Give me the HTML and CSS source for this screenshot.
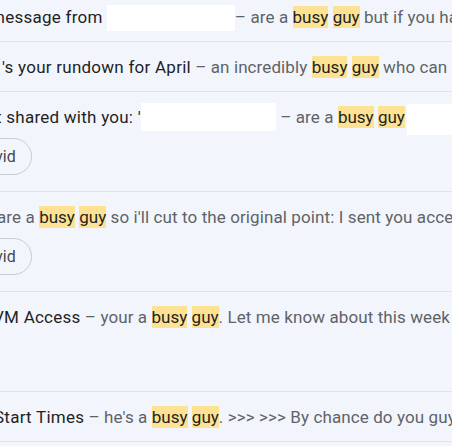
FILE: index.html
```html
<!DOCTYPE html>
<html>
<head>
<meta charset="utf-8">
<link rel="stylesheet" href="styles.css">
</head>
<body>
<div class="list">
  <div class="row">
    <div class="line off-1"><span class="subj">message from</span> <span class="redact r-a"></span><span class="snip">– are a <mark class="hl">busy</mark> <mark class="hl">guy</mark> but if you have a minute</span></div>
  </div>
  <div class="row">
    <div class="line off-2"><span class="subj">'s your rundown for April</span> <span class="snip">– an incredibly <mark class="hl">busy</mark> <mark class="hl">guy</mark> who can never</span></div>
  </div>
  <div class="row tall">
    <div class="line off-3"><span class="subj">t shared with you: '</span><span class="redact r-b"></span> <span class="snip">– are a <mark class="hl">busy</mark> <mark class="hl">guy</mark></span><span class="redact r-c"></span></div>
    <div class="chips"><span class="chip">vid</span></div>
  </div>
  <div class="row tall">
    <div class="line off-4"><span class="snip">are a <mark class="hl">busy</mark> <mark class="hl">guy</mark> so i'll cut to the original point: I sent you access</span></div>
    <div class="chips"><span class="chip">vid</span></div>
  </div>
  <div class="row tall">
    <div class="line off-5"><span class="subj">VM Access</span> <span class="snip">– your a <mark class="hl">busy</mark> <mark class="hl">guy</mark>. Let me know about this week</span></div>
  </div>
  <div class="row">
    <div class="line off-6"><span class="subj">Start Times</span> <span class="snip">– he's a <mark class="hl">busy</mark> <mark class="hl">guy</mark>. &gt;&gt;&gt; &gt;&gt;&gt; By chance do you guys</span></div>
  </div>
</div>
</body>
</html>
```
FILE: styles.css
```css
html, body {
  margin: 0;
  padding: 0;
  background: #f2f6fc;
  overflow: hidden;
}
body {
  width: 452px;
  height: 446px;
  font-family: Roboto, "Noto Sans", sans-serif;
}
.list {
  margin-top: -8px;
}
.row {
  height: 35px;
  padding-top: 14px;
  border-bottom: 1px solid #dfe3ea;
  overflow: hidden;
}
.row.tall {
  height: 85px;
}
.line {
  height: 22px;
  line-height: 22px;
  font-size: 17px;
  white-space: nowrap;
}
.subj {
  color: #1f1f1f;
  letter-spacing: 0.25px;
}
.snip {
  color: #5f6368;
  letter-spacing: 0.1px;
}
.hl {
  background: #fde293;
  color: #1f1f1f;
  padding: 1px 0;
  letter-spacing: 0;
}
.redact {
  display: inline-block;
  background: #ffffff;
  vertical-align: top;
}
.r-a {
  width: 128px;
  height: 26px;
  margin-top: -1px;
  margin-bottom: -3px;
}
.r-b {
  width: 135px;
  height: 28px;
  margin-top: -3px;
  margin-bottom: -3px;
}
.r-c {
  width: 60px;
  height: 31px;
  margin-top: -2px;
  margin-left: 2px;
  margin-bottom: -7px;
}
.off-1 { margin-left: -10px; }
.off-2 { margin-left: 2px; }
.off-3 { margin-left: -4px; }
.off-4 { margin-left: -3px; }
.off-5 { margin-left: -7px; }
.off-6 { margin-left: -6px; }
.chips {
  margin-top: 10px;
  margin-left: -18px;
  display: flex;
}
.chip {
  display: inline-flex;
  align-items: center;
  height: 35px;
  padding: 0 15px 0 12px;
  border: 1px solid #c7ccd3;
  border-radius: 19px;
  font-size: 16px;
  color: #444746;
}
```
